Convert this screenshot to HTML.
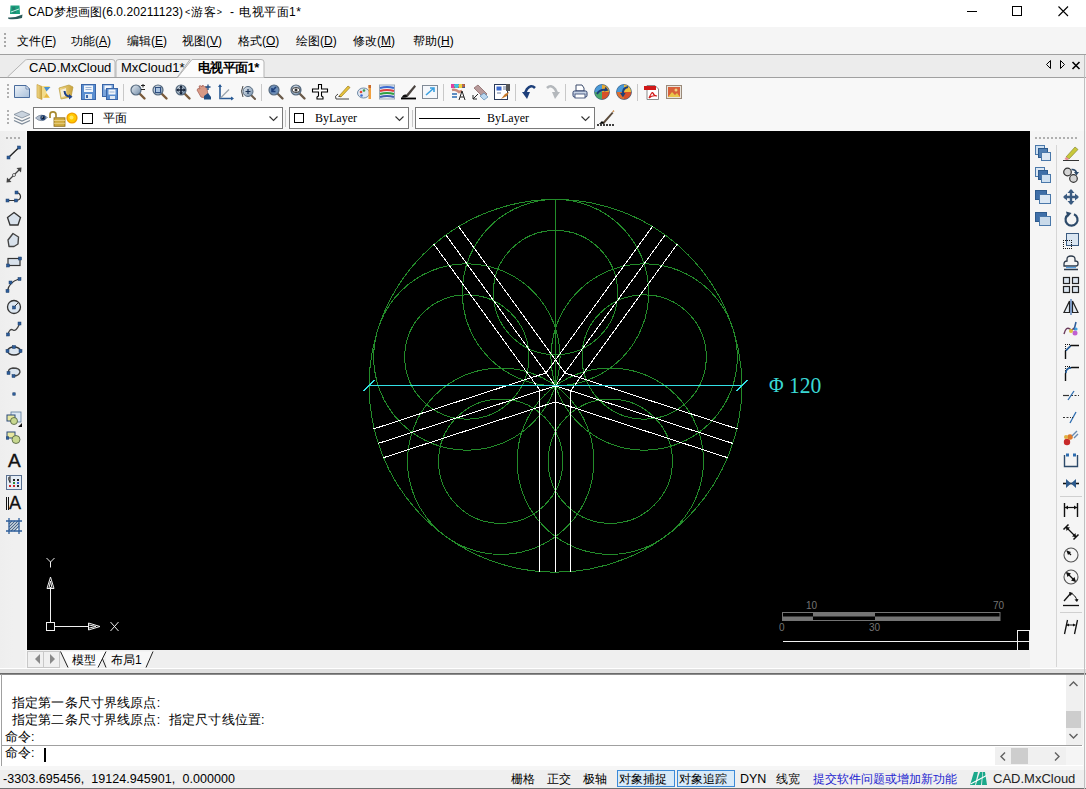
<!DOCTYPE html>
<html><head><meta charset="utf-8">
<style>
*{box-sizing:border-box}
html,body{margin:0;padding:0;width:1086px;height:789px;overflow:hidden;background:#f0f0f0;font-family:"Liberation Sans",sans-serif;color:#000}
.a{position:absolute}
.t{position:absolute;white-space:nowrap;font-size:12px;line-height:14px}
svg{position:absolute;overflow:visible}
</style></head><body>
<!-- title bar -->
<div class="a" style="left:0;top:0;width:1086px;height:27px;background:#fff"></div>
<svg style="left:7px;top:4px" width="17" height="16" viewBox="0 0 17 16">
<path d="M3.5 1.5 H12.5 L13 10 H3 Z" fill="#1aa07e"/>
<path d="M5 3 L8 2.5 L9 9 L6 9.5 Z" fill="#2a6a66" opacity=".6"/>
<path d="M4 8 L12 5" stroke="#bff0e0" stroke-width="1"/>
<path d="M1 13.5 Q8 14 15.5 10.5 L15 14 Q8 16 1.5 15 Z" fill="#2a5a5a"/>
</svg>
<div class="t" style="left:28px;top:5px;font-size:12px;color:#000;letter-spacing:.1px">CAD梦想画图(6.0.20211123)<span style="font-size:9px;margin:0 1px 0 2px;position:relative;top:-1px">&lt;</span>游客<span style="font-size:9px;margin:0 0 0 1px;position:relative;top:-1px">&gt;</span><span style="margin-left:8px">-</span><span style="margin-left:5px;letter-spacing:.5px">电视平面1*</span></div>
<svg style="left:966px;top:5px" width="14" height="14"><line x1="1" y1="6.5" x2="11" y2="6.5" stroke="#000" stroke-width="1"/></svg>
<svg style="left:1011px;top:5px" width="14" height="14"><rect x="1.5" y="1.5" width="9" height="9" fill="none" stroke="#000" stroke-width="1"/></svg>
<svg style="left:1057px;top:5px" width="14" height="14"><path d="M1.5 1.5 L11 11 M11 1.5 L1.5 11" stroke="#000" stroke-width="1.1"/></svg>

<!-- menu bar -->
<div class="a" style="left:0;top:27px;width:1086px;height:27px;background:#f5f5f5"></div>
<div class="a" style="left:0;top:54px;width:1086px;height:1px;background:#a0a0a0"></div>
<div class="a" style="left:4px;top:33px;width:2px;height:14px;background:repeating-linear-gradient(#a8a8a8 0 2px,transparent 2px 4px)"></div>
<div class="t" style="left:17px;top:34px">文件(<u>F</u>)</div>
<div class="t" style="left:71px;top:34px">功能(<u>A</u>)</div>
<div class="t" style="left:127px;top:34px">编辑(<u>E</u>)</div>
<div class="t" style="left:182px;top:34px">视图(<u>V</u>)</div>
<div class="t" style="left:238px;top:34px">格式(<u>O</u>)</div>
<div class="t" style="left:296px;top:34px">绘图(<u>D</u>)</div>
<div class="t" style="left:353px;top:34px">修改(<u>M</u>)</div>
<div class="t" style="left:413px;top:34px">帮助(<u>H</u>)</div>

<!-- tab bar -->
<div class="a" style="left:0;top:55px;width:1086px;height:22px;background:#ececec"></div>
<div class="a" style="left:0;top:77px;width:1086px;height:1px;background:#a0a0a0"></div>
<svg style="left:0;top:55px" width="280" height="23">
<path d="M7.5 22 L25.5 5 Q26.5 4.5 28 4.5 L112 4.5 Q115 4.5 115 7 L115 22" fill="#f3f3f3" stroke="#b4b4b4"/>
<path d="M116 22 L116 7 Q116 4.5 119 4.5 L190 4.5 L177.5 22" fill="#f3f3f3" stroke="#b4b4b4"/>
<path d="M177.5 22.5 L192 4.5 L261 4.5 Q264 4.5 264 7 L264 22.5" fill="#fcfcfc" stroke="#b4b4b4"/>
</svg>
<div class="t" style="left:29px;top:60px;font-size:13px;line-height:15px">CAD.MxCloud</div>
<div class="t" style="left:121px;top:60px;font-size:13px;line-height:15px">MxCloud1*</div>
<div class="t" style="left:198px;top:60px;font-size:13px;line-height:15px;font-weight:bold;letter-spacing:-0.6px">电视平面1*</div>
<svg style="left:1044px;top:59px" width="40" height="12">
<path d="M6.5 1.5 L2.5 5.5 L6.5 9.5 Z" fill="none" stroke="#000"/>
<path d="M16.5 1.5 L20.5 5.5 L16.5 9.5 Z" fill="none" stroke="#000"/>
<path d="M28.5 3 L35.5 10 M35.5 3 L28.5 10" stroke="#000" stroke-width="1.6"/>
</svg>


<!-- toolbars -->
<div class="a" style="left:0;top:78px;width:1086px;height:53px;background:#f8f8f8"></div>
<svg width="0" height="0" style="left:0;top:0"><defs>
<linearGradient id="gBlueL" x1="0" y1="0" x2="1" y2="1"><stop offset="0" stop-color="#eef3f9"/><stop offset="1" stop-color="#a9c0da"/></linearGradient>
<linearGradient id="gMag" x1="0" y1="0" x2="1" y2="1"><stop offset="0" stop-color="#e8eef4"/><stop offset="1" stop-color="#6f8aa6"/></linearGradient>
<linearGradient id="gFold" x1="0" y1="0" x2="1" y2="0"><stop offset="0" stop-color="#f4dc8c"/><stop offset="1" stop-color="#c9a23c"/></linearGradient>
<radialGradient id="gGlobe" cx=".4" cy=".4" r=".7"><stop offset="0" stop-color="#f6d36a"/><stop offset=".45" stop-color="#3f9bd4"/><stop offset=".8" stop-color="#d35a2a"/><stop offset="1" stop-color="#2f5f9a"/></radialGradient>
<radialGradient id="gSun" cx=".5" cy=".5" r=".5"><stop offset="0" stop-color="#ffe070"/><stop offset="1" stop-color="#e8a800"/></radialGradient>
</defs></svg>
<div class="a" style="left:7px;top:84px;width:2px;height:16px;background:repeating-linear-gradient(#b0b0b0 0 2px,transparent 2px 4px)"></div>
<svg style="left:14px;top:84px" width="16" height="16" viewBox="0 0 16 16"><path d="M0.5 1.5 H12 L15.5 5 V13.5 H0.5 Z" fill="url(#gBlueL)" stroke="#4a6c9c"/><path d="M12 1.5 L12 5 L15.5 5 Z" fill="#f4f7fb" stroke="#4a6c9c" stroke-width=".7"/></svg>
<svg style="left:36px;top:84px" width="16" height="16" viewBox="0 0 16 16"><path d="M1 0.5 L6 2.5 V15.5 L1 13.5 Z" fill="url(#gFold)" stroke="#c8a040" stroke-width=".7"/><path d="M6 2 H14 L10 8 L14 14 H6 Z" fill="#f3dc8a"/><path d="M8 3 H14.5 L10.5 7.5 Z" fill="#4a90d0"/><path d="M8 13.5 H13.5 L10.5 9.5 Z" fill="#e8b840"/></svg>
<svg style="left:58px;top:84px" width="16" height="16" viewBox="0 0 16 16"><path d="M1 4 L11 1 L15 3 L13 13 L3 15 Z" fill="url(#gFold)" stroke="#b89a3a" stroke-width=".7"/><path d="M2.5 6 L8 4 L8.5 12 L3.5 13 Z" fill="#f6f2e6" opacity=".9"/><path d="M6.5 7 Q7 12.5 12 12.5" stroke="#1d3f86" stroke-width="2" fill="none"/><path d="M11 10 L14.5 12.7 L11 15.5 Z" fill="#1d3f86"/></svg>
<svg style="left:81px;top:84px" width="16" height="16" viewBox="0 0 16 16"><rect x="0.5" y="0.5" width="14" height="15" fill="#5a8ed0" stroke="#3a66a8"/><rect x="3" y="1.5" width="9" height="6.5" fill="#f2f6fb"/><line x1="4.5" y1="3.5" x2="10.5" y2="3.5" stroke="#9ab3d4"/><line x1="4.5" y1="5.5" x2="10.5" y2="5.5" stroke="#9ab3d4"/><rect x="4" y="10" width="7" height="5" fill="#dfe8f3"/><rect x="5" y="11" width="2" height="3" fill="#3a66a8"/></svg>
<svg style="left:102px;top:84px" width="16" height="16" viewBox="0 0 16 16"><rect x="0.5" y="0.5" width="11" height="12" fill="#7aa4da" stroke="#3a66a8"/><rect x="2.5" y="1.5" width="7" height="4" fill="#f2f6fb"/><rect x="4.5" y="4.5" width="11" height="11" fill="#5a8ed0" stroke="#3a66a8"/><rect x="6.5" y="5.5" width="7" height="5" fill="#f2f6fb"/><line x1="7.5" y1="8" x2="12.5" y2="8" stroke="#9ab3d4"/><rect x="8" y="12" width="5" height="3" fill="#dfe8f3"/></svg>
<div class="a" style="left:123px;top:84px;width:1px;height:17px;background:#c8c8c8"></div>
<svg style="left:130px;top:84px" width="16" height="16" viewBox="0 0 16 16"><line x1="9" y1="9" x2="14.5" y2="14.5" stroke="#7a5a3a" stroke-width="2.4" stroke-linecap="round"/><circle cx="6" cy="6" r="5" fill="url(#gMag)" stroke="#55697e" stroke-width="1.2"/><path d="M11 1.5 H15 M13 0 V3.5 M11 5.5 H15" stroke="#222" stroke-width="1"/></svg>
<svg style="left:152px;top:84px" width="16" height="16" viewBox="0 0 16 16"><line x1="9" y1="9" x2="14.5" y2="14.5" stroke="#7a5a3a" stroke-width="2.4" stroke-linecap="round"/><circle cx="6" cy="6" r="5" fill="url(#gMag)" stroke="#55697e" stroke-width="1.2"/><rect x="3.5" y="3.5" width="5" height="5" fill="#a9c3e0" stroke="#2e4f82"/></svg>
<svg style="left:175px;top:84px" width="16" height="16" viewBox="0 0 16 16"><line x1="9" y1="9" x2="14.5" y2="14.5" stroke="#7a5a3a" stroke-width="2.4" stroke-linecap="round"/><circle cx="6" cy="6" r="5" fill="url(#gMag)" stroke="#55697e" stroke-width="1.2"/><path d="M6 2 V10 M2 6 H10" stroke="#17243a" stroke-width="1.6"/><path d="M6 1 L4 3.5 H8 Z M6 11 L4 8.5 H8 Z M1 6 L3.5 4 V8 Z M11 6 L8.5 4 V8 Z" fill="#17243a"/></svg>
<svg style="left:196px;top:84px" width="16" height="16" viewBox="0 0 16 16"><path d="M1 6 Q2 3 4 5 L3 2 Q5 1 6 3 L6 1.5 Q8 1 8.5 3 L9 2.5 Q11 2.5 11 5 L12 11 L9 14 L5 13 Z" fill="#d89a86" stroke="#a9665a" stroke-width=".8"/><path d="M8 12 L12 9 L15 13 V15.5 H8 Z" fill="#1f4c80"/><path d="M12 0.5 V6 M9.5 3 H14.5" stroke="#1f4c80" stroke-width="1.3"/></svg>
<svg style="left:218px;top:84px" width="16" height="16" viewBox="0 0 16 16"><path d="M2 1 V14.5 H15" stroke="#2a5b95" stroke-width="1.6" fill="none"/><path d="M2 0 L0 3 H4 Z M16 14.5 L13 12.5 V16.5 Z" fill="#2a5b95"/><line x1="2.5" y1="14" x2="11" y2="5.5" stroke="#9aa4ae" stroke-width="1.3"/></svg>
<svg style="left:240px;top:84px" width="16" height="16" viewBox="0 0 16 16"><line x1="10" y1="10" x2="15" y2="15" stroke="#6a5a4a" stroke-width="2" stroke-linecap="round"/><circle cx="8" cy="7.5" r="5" fill="url(#gMag)" stroke="#55697e"/><path d="M8 5 V10 M5.5 7.5 H10.5" stroke="#1d3558" stroke-width="1.2"/><path d="M3 2 Q0 7 3 13" stroke="#444" fill="none"/></svg>
<div class="a" style="left:261px;top:84px;width:1px;height:17px;background:#c8c8c8"></div>
<svg style="left:268px;top:84px" width="16" height="16" viewBox="0 0 16 16"><line x1="9" y1="9" x2="14.5" y2="14.5" stroke="#6a5a4a" stroke-width="2.4" stroke-linecap="round"/><circle cx="6" cy="6" r="5" fill="#6e8fb8" stroke="#55697e" stroke-width="1.2"/><path d="M8 3 L4 7 M4 4 V7.5 H7.5" stroke="#1d3f7a" stroke-width="1.6" fill="none"/></svg>
<svg style="left:290px;top:84px" width="16" height="16" viewBox="0 0 16 16"><line x1="9" y1="9" x2="14.5" y2="14.5" stroke="#6a5a4a" stroke-width="2.4" stroke-linecap="round"/><circle cx="6" cy="6" r="5" fill="url(#gMag)" stroke="#55697e" stroke-width="1.2"/><ellipse cx="6" cy="6" rx="4" ry="2.4" fill="#fff" stroke="#333"/><circle cx="6" cy="6" r="1.5" fill="#333"/></svg>
<svg style="left:312px;top:84px" width="16" height="16" viewBox="0 0 16 16"><path d="M6.5 0.5 H9.5 V5 H15.5 V8 H9.5 V12 L11 13 V15 H5 V13 L6.5 12 V8 H0.5 V5 H6.5 Z" fill="#fff" stroke="#000" stroke-width="1.1"/></svg>
<svg style="left:334px;top:84px" width="16" height="16" viewBox="0 0 16 16"><path d="M5 12 L14 2 L16 3.5 L7 13 Z" fill="#e8c43c" stroke="#9a7a1a" stroke-width=".7"/><path d="M4 13 L5 12 L7 13 Z" fill="#333"/><path d="M4 10 Q0 12 2 15 H15" stroke="#444" fill="none"/></svg>
<svg style="left:357px;top:84px" width="16" height="16" viewBox="0 0 16 16"><ellipse cx="6.5" cy="9" rx="6" ry="5" fill="#dfe8f2" stroke="#6f8aa6"/><circle cx="4" cy="8" r="1.3" fill="#e34a3a"/><circle cx="7" cy="6.5" r="1.3" fill="#3a9a4a"/><circle cx="4.5" cy="11.5" r="1.3" fill="#3a6ad0"/><rect x="11.5" y="1" width="2.5" height="14" fill="#f0a040"/><rect x="11.5" y="1" width="2.5" height="3" fill="#c86a2a"/></svg>
<svg style="left:379px;top:84px" width="16" height="16" viewBox="0 0 16 16"><rect x="0.5" y="1" width="15" height="14" fill="#e9eef4" stroke="#9aaabb"/><path d="M1 4 Q8 2 15 4" stroke="#3a6ad0" stroke-width="2" fill="none"/><path d="M1 7 Q8 5 15 7" stroke="#e04040" stroke-width="2" fill="none"/><path d="M1 10 Q8 8 15 10" stroke="#30a040" stroke-width="2" fill="none"/><path d="M1 13 Q8 11 15 13" stroke="#4060b0" stroke-width="2" fill="none"/></svg>
<svg style="left:400px;top:84px" width="16" height="16" viewBox="0 0 16 16"><line x1="1" y1="14.5" x2="16" y2="14.5" stroke="#000" stroke-width="1.8"/><path d="M6 11 L14.5 1 L16 2.5 L8 12.5 Z" fill="#4a4440"/><path d="M1.5 13.8 Q3 10 6 10.5 L8 12.5 Q6 14 1.5 13.8 Z" fill="#111"/></svg>
<svg style="left:422px;top:84px" width="16" height="16" viewBox="0 0 16 16"><rect x="0.5" y="1.5" width="15" height="13" fill="#f4f7fb" stroke="#808a96"/><path d="M4 11 L12 4 M8 4 H12 V8" stroke="#3aa0e0" stroke-width="1.6" fill="none"/></svg>
<div class="a" style="left:443px;top:84px;width:1px;height:17px;background:#c8c8c8"></div>
<svg style="left:450px;top:84px" width="16" height="16" viewBox="0 0 16 16"><rect x="1" y="0" width="14" height="4" fill="url(#gGlobe)"/><path d="M1 0 H4 V4 H1Z" fill="#e040a0"/><path d="M5 0 H8 V4 H5Z" fill="#40c0e0"/><path d="M9 0 H12 V4 H9Z" fill="#f0d040"/><path d="M2 6 Q6 5 9 8 L12 7" stroke="#c98a7a" stroke-width="2.5" fill="none"/><path d="M2 10 H7 M2 13 H7" stroke="#2a6ab0" stroke-width="1.5"/><path d="M9 16 L12 7 L15 16 M10 13 H14" stroke="#222" fill="none"/></svg>
<svg style="left:472px;top:84px" width="16" height="16" viewBox="0 0 16 16"><path d="M2 4 L6 1 L15 10 L11 13 Z" fill="#b89a9a" stroke="#8a6a6a" stroke-width=".8"/><path d="M1 15 L6 10 M1 15 V11 M1 15 H5" stroke="#222" fill="none"/><path d="M8 12 L12 16 L16 13 L12 9 Z" fill="#bcd8f0" stroke="#5a8ab0" stroke-width=".7"/></svg>
<svg style="left:494px;top:84px" width="16" height="16" viewBox="0 0 16 16"><rect x="0.5" y="0.5" width="13" height="15" fill="#fff" stroke="#2a3a5a"/><rect x="2.5" y="2.5" width="5" height="4" fill="#3a6ad0"/><path d="M9 3 H12 M9 5 H12 M3 9 H7" stroke="#6a7a9a"/><path d="M7 15 L11 10 L15 8 L13 12 Z" fill="#c87a2a"/><rect x="12" y="0" width="4" height="7" fill="#555"/></svg>
<div class="a" style="left:515px;top:84px;width:1px;height:17px;background:#c8c8c8"></div>
<svg style="left:522px;top:84px" width="16" height="16" viewBox="0 0 16 16"><path d="M13 4 Q9 0 5 5 L3 9" stroke="#1d3f7a" stroke-width="2.6" fill="none"/><path d="M0 8 L5 15 L8 8 Z" fill="#1d3f7a"/></svg>
<svg style="left:544px;top:84px" width="16" height="16" viewBox="0 0 16 16"><path d="M3 4 Q7 0 11 5 L13 9" stroke="#b4b8bc" stroke-width="2.6" fill="none"/><path d="M16 8 L11 15 L8 8 Z" fill="#b4b8bc"/></svg>
<div class="a" style="left:565px;top:84px;width:1px;height:17px;background:#c8c8c8"></div>
<svg style="left:572px;top:84px" width="16" height="16" viewBox="0 0 16 16"><path d="M4 1 H10 L12 4 V7 H4 Z" fill="#fff" stroke="#3a4a6a"/><rect x="1" y="7" width="14" height="6" rx="1.5" fill="#c8d4e6" stroke="#2e3f6a"/><rect x="3" y="10" width="10" height="4" fill="#fff" stroke="#2e3f6a" stroke-width=".8"/></svg>
<svg style="left:594px;top:84px" width="16" height="16" viewBox="0 0 16 16"><circle cx="8" cy="8" r="7.5" fill="#3a8ad0"/><path d="M8 8 L8 0.5 A7.5 7.5 0 0 1 15.5 8 Z" fill="#e8a830"/><path d="M8 8 L15.5 8 A7.5 7.5 0 0 1 8 15.5 Z" fill="#d8502a"/><path d="M8 8 L8 15.5 A7.5 7.5 0 0 1 0.5 8 Z" fill="#4aa86a"/><path d="M8 8 L0.5 8 A7.5 7.5 0 0 1 8 0.5 Z" fill="#4a9ad8"/><circle cx="8" cy="8" r="7.5" fill="none" stroke="#3a5a7a" stroke-width=".6"/><path d="M3 10 Q6 5 12 6" stroke="#1d3f7a" stroke-width="2" fill="none"/><path d="M11.5 2.5 L14.5 6.5 L10 7.5 Z" fill="#1d3f7a"/></svg>
<svg style="left:616px;top:84px" width="16" height="16" viewBox="0 0 16 16"><circle cx="8" cy="8" r="7.5" fill="#3a8ad0"/><path d="M8 8 L8 0.5 A7.5 7.5 0 0 1 15.5 8 Z" fill="#f0c040"/><path d="M8 8 L15.5 8 A7.5 7.5 0 0 1 8 15.5 Z" fill="#d8502a"/><path d="M8 8 L8 15.5 A7.5 7.5 0 0 1 0.5 8 Z" fill="#e07030"/><path d="M8 8 L0.5 8 A7.5 7.5 0 0 1 8 0.5 Z" fill="#4a9ad8"/><circle cx="8" cy="8" r="7.5" fill="none" stroke="#3a5a7a" stroke-width=".6"/><path d="M12 3 Q6 4 7 11" stroke="#1d3f7a" stroke-width="2" fill="none"/><path d="M4 9 L7 13.5 L9.5 9 Z" fill="#1d3f7a"/></svg>
<div class="a" style="left:637px;top:84px;width:1px;height:17px;background:#c8c8c8"></div>
<svg style="left:644px;top:84px" width="16" height="16" viewBox="0 0 16 16"><path d="M3 1.5 H11 L14.5 5 V15.5 H3 Z" fill="#fff" stroke="#8a8a8a"/><rect x="0" y="2" width="12" height="4" fill="#d01818"/><path d="M5 14 Q8 7 9 9 Q10 12 13 12 Q8 11 5 14" stroke="#d01818" fill="none" stroke-width="1.2"/></svg>
<svg style="left:666px;top:84px" width="16" height="16" viewBox="0 0 16 16"><rect x="0.5" y="1.5" width="15" height="13" fill="#e9e4dc" stroke="#9a8a7a"/><rect x="2" y="3" width="12" height="10" fill="#d8603a"/><path d="M2 13 L6 8 L9 11 L11 9 L14 13 Z" fill="#e9c44a"/><circle cx="10" cy="6" r="1.5" fill="#f0d080"/></svg>


<!-- row2 -->
<div class="a" style="left:7px;top:110px;width:2px;height:15px;background:repeating-linear-gradient(#b0b0b0 0 2px,transparent 2px 4px)"></div>
<svg style="left:14px;top:110px" width="16" height="16" viewBox="0 0 16 16"><path d="M8 1 L16 4.5 L8 8 L0 4.5 Z" fill="#c9d3de" stroke="#7d8a98" stroke-width=".8"/><path d="M0 7.5 L8 11 L16 7.5" fill="none" stroke="#7d8a98" stroke-width="1.2"/><path d="M0 10.5 L8 14 L16 10.5" fill="none" stroke="#7d8a98" stroke-width="1.2"/></svg>
<div class="a" style="left:33px;top:107px;width:250px;height:22px;background:#fff;border:1px solid #7a7a7a"></div>
<svg style="left:35px;top:113px" width="13" height="10" viewBox="0 0 13 10"><path d="M0.5 5 Q6 -0.5 12.5 4.5 Q6 10.5 0.5 5 Z" fill="#b4c0d0" stroke="#5a6a80" stroke-width=".6"/><circle cx="8" cy="4.8" r="2.7" fill="#2a4a78"/><circle cx="8" cy="4.8" r="1.2" fill="#0d1a30"/><circle cx="7.3" cy="4" r=".6" fill="#fff"/></svg>
<svg style="left:48px;top:110px" width="18" height="18" viewBox="0 0 18 18"><path d="M2 8 V4.5 Q2 1.8 5 1.8 Q8 1.8 8 4.5 V7.5" stroke="#a88a30" stroke-width="1.7" fill="none"/><rect x="6" y="7.8" width="11" height="8.5" fill="#d0ac40" stroke="#8a6a1a" stroke-width=".8"/><path d="M6 10.5 H17 M6 13.3 H17" stroke="#f0d890" stroke-width=".8"/></svg>
<svg style="left:66px;top:112px" width="12" height="12" viewBox="0 0 12 12"><circle cx="6" cy="6" r="5.6" fill="#f0a000"/><circle cx="6" cy="6" r="4.2" fill="#ffc800"/><circle cx="5.5" cy="5.5" r="2" fill="#ffe860"/></svg>
<div class="a" style="left:82px;top:113px;width:11px;height:11px;border:1px solid #000;background:#fff"></div>
<div class="t" style="left:103px;top:111px;font-size:12px">平面</div>
<svg style="left:269px;top:116px" width="9" height="6" viewBox="0 0 9 6"><path d="M0.5 0.5 L4.5 4.5 L8.5 0.5" stroke="#333" fill="none" stroke-width="1.1"/></svg>
<div class="a" style="left:285px;top:110px;width:1px;height:17px;background:#c8c8c8"></div>
<div class="a" style="left:289px;top:107px;width:120px;height:22px;background:#fff;border:1px solid #7a7a7a"></div>
<div class="a" style="left:294px;top:113px;width:10px;height:10px;border:1px solid #000;background:#fff"></div>
<div class="t" style="left:315px;top:111px;font-family:'Liberation Serif',serif;font-size:12px">ByLayer</div>
<svg style="left:395px;top:116px" width="9" height="6" viewBox="0 0 9 6"><path d="M0.5 0.5 L4.5 4.5 L8.5 0.5" stroke="#333" fill="none" stroke-width="1.1"/></svg>
<div class="a" style="left:412px;top:110px;width:1px;height:17px;background:#c8c8c8"></div>
<div class="a" style="left:415px;top:107px;width:180px;height:22px;background:#fff;border:1px solid #7a7a7a"></div>
<div class="a" style="left:419px;top:118px;width:61px;height:1px;background:#000"></div>
<div class="t" style="left:487px;top:111px;font-family:'Liberation Serif',serif;font-size:12px">ByLayer</div>
<svg style="left:581px;top:116px" width="9" height="6" viewBox="0 0 9 6"><path d="M0.5 0.5 L4.5 4.5 L8.5 0.5" stroke="#333" fill="none" stroke-width="1.1"/></svg>
<svg style="left:597px;top:110px" width="18" height="17" viewBox="0 0 18 17"><path d="M0 15 H17" stroke="#000" stroke-width="1.3" stroke-dasharray="2 1"/><path d="M5 13 L15 2 L16.5 3 L7 14 Z" fill="#5a4a3a"/><path d="M15 2 L16.5 0 L17.5 1.5 Z" fill="#c87a2a"/><path d="M2 14 L5 11 L7.5 13.5 Z" fill="#000"/></svg>


<!-- left toolbar -->
<div class="a" style="left:0;top:131px;width:27px;height:540px;background:linear-gradient(90deg,#eeeeee,#f0f0f0 50%,#f0f0f0 92%,#f9f9f9)"></div>
<div class="a" style="left:6px;top:137px;width:14px;height:2px;background:repeating-linear-gradient(90deg,#b0b0b0 0 2px,transparent 2px 4px)"></div>
<svg style="left:6px;top:145px" width="16" height="16" viewBox="0 0 16 16"><line x1="2" y1="13" x2="13.5" y2="2" stroke="#222" stroke-width="1.4"/><rect x="1.0" y="11.0" width="3" height="3" fill="#2d5d9a" stroke="#1d3f6a" stroke-width=".5"/><rect x="11.5" y="1.0" width="3" height="3" fill="#2d5d9a" stroke="#1d3f6a" stroke-width=".5"/></svg>
<svg style="left:6px;top:167px" width="16" height="16" viewBox="0 0 16 16"><line x1="1.5" y1="14.5" x2="14.5" y2="1.5" stroke="#444" stroke-width="1.2"/><path d="M0.5 15.5 L1 10.5 L5.5 15 Z M15.5 0.5 L15 5.5 L10.5 1 Z" fill="#444"/><circle cx="8" cy="8" r="1.5" fill="#fff" stroke="#444" stroke-width=".8"/></svg>
<svg style="left:6px;top:189px" width="16" height="16" viewBox="0 0 16 16"><path d="M1.5 11.5 H10 Q15 11 14.5 7 Q14 4 10.5 3.5" stroke="#333" stroke-width="1.2" fill="none"/><rect x="0.0" y="10.0" width="3" height="3" fill="#2d5d9a" stroke="#1d3f6a" stroke-width=".5"/><rect x="8.5" y="10.0" width="3" height="3" fill="#2d5d9a" stroke="#1d3f6a" stroke-width=".5"/><rect x="9.0" y="2.0" width="3" height="3" fill="#2d5d9a" stroke="#1d3f6a" stroke-width=".5"/></svg>
<svg style="left:6px;top:211px" width="16" height="16" viewBox="0 0 16 16"><path d="M8 1.5 L14.5 6.5 L12 14 H4 L1.5 6.5 Z" fill="#d9e2ec" stroke="#333" stroke-width="1.3"/></svg>
<svg style="left:6px;top:232px" width="16" height="16" viewBox="0 0 16 16"><path d="M7 1.5 L12.5 5 L12 12 L8 14.5 H3 L2 8 Z" fill="#d9e2ec" stroke="#444" stroke-width="1.4" stroke-linejoin="round"/></svg>
<svg style="left:6px;top:254px" width="16" height="16" viewBox="0 0 16 16"><rect x="2" y="4.5" width="12" height="7" fill="#d9e2ec" stroke="#333" stroke-width="1.2"/><rect x="0.5" y="10.0" width="3" height="3" fill="#2d5d9a" stroke="#1d3f6a" stroke-width=".5"/><rect x="12.5" y="3.0" width="3" height="3" fill="#2d5d9a" stroke="#1d3f6a" stroke-width=".5"/></svg>
<svg style="left:6px;top:277px" width="16" height="16" viewBox="0 0 16 16"><path d="M1.5 14 Q3 5 13 2" stroke="#333" stroke-width="1.3" fill="none"/><rect x="0.0" y="12.5" width="3" height="3" fill="#2d5d9a" stroke="#1d3f6a" stroke-width=".5"/><rect x="3.0" y="4.0" width="3" height="3" fill="#2d5d9a" stroke="#1d3f6a" stroke-width=".5"/><rect x="12.0" y="0.5" width="3" height="3" fill="#2d5d9a" stroke="#1d3f6a" stroke-width=".5"/></svg>
<svg style="left:6px;top:299px" width="16" height="16" viewBox="0 0 16 16"><circle cx="8" cy="8" r="6.5" fill="#dce6f0" stroke="#333" stroke-width="1.3"/><line x1="8" y1="8" x2="12" y2="4" stroke="#333"/><rect x="6.5" y="7.0" width="3" height="3" fill="#2d5d9a" stroke="#1d3f6a" stroke-width=".5"/></svg>
<svg style="left:6px;top:321px" width="16" height="16" viewBox="0 0 16 16"><path d="M2 13 Q4 7 7 9 Q10 11 13.5 3" stroke="#444" stroke-width="1.3" fill="none"/><rect x="0.5" y="12.0" width="3" height="3" fill="#2d5d9a" stroke="#1d3f6a" stroke-width=".5"/><rect x="12.0" y="1.0" width="3" height="3" fill="#2d5d9a" stroke="#1d3f6a" stroke-width=".5"/></svg>
<svg style="left:6px;top:343px" width="16" height="16" viewBox="0 0 16 16"><ellipse cx="8" cy="8" rx="6.5" ry="4" fill="#dce6f0" stroke="#333" stroke-width="1.3"/><rect x="6.5" y="2.5" width="3" height="3" fill="#2d5d9a" stroke="#1d3f6a" stroke-width=".5"/><rect x="0.0" y="6.5" width="3" height="3" fill="#2d5d9a" stroke="#1d3f6a" stroke-width=".5"/><rect x="13.0" y="6.5" width="3" height="3" fill="#2d5d9a" stroke="#1d3f6a" stroke-width=".5"/></svg>
<svg style="left:6px;top:364px" width="16" height="16" viewBox="0 0 16 16"><path d="M3 9 Q1 5 7 4 Q14 4 14 8 Q13 12 7.5 12" stroke="#444" stroke-width="1.3" fill="#dce6f0"/><rect x="1.0" y="7.5" width="3" height="3" fill="#2d5d9a" stroke="#1d3f6a" stroke-width=".5"/><rect x="6.0" y="10.5" width="3" height="3" fill="#2d5d9a" stroke="#1d3f6a" stroke-width=".5"/></svg>
<svg style="left:6px;top:386px" width="16" height="16" viewBox="0 0 16 16"><rect x="6.75" y="6.75" width="2.5" height="2.5" fill="#2d5d9a" stroke="#1d3f6a" stroke-width=".5"/></svg>
<svg style="left:6px;top:411px" width="16" height="16" viewBox="0 0 16 16"><rect x="5" y="1" width="10" height="10" fill="#dde8f4" stroke="#5a7a9a" stroke-width=".8"/><rect x="1" y="4" width="8" height="6" fill="#e8e8a0" stroke="#2a4a7a"/><circle cx="8" cy="10" r="3.5" fill="#c8d890" stroke="#4a5a3a" stroke-width=".8"/><path d="M16 12 V16 H12 Z" fill="#111"/></svg>
<svg style="left:6px;top:430px" width="16" height="16" viewBox="0 0 16 16"><rect x="1" y="2" width="8" height="6" fill="#e8e8a0" stroke="#2a4a7a"/><circle cx="10" cy="9.5" r="4" fill="#c8d890" stroke="#4a5a3a" stroke-width=".8"/><rect x="0.25" y="6.75" width="2.5" height="2.5" fill="#2d5d9a" stroke="#1d3f6a" stroke-width=".5"/></svg>
<div class="t" style="left:8px;top:451px;font-size:19px;line-height:19px;color:#111;-webkit-text-stroke:.4px #111">A</div>
<svg style="left:6px;top:475px" width="16" height="16" viewBox="0 0 16 16"><rect x="0.5" y="0.5" width="15" height="14" fill="#e4ecf4" stroke="#5a7090"/><path d="M4 1 V8 M3 2 Q2 5 4 7" stroke="#222" fill="none"/><rect x="7" y="4" width="2" height="2" fill="#222"/><rect x="11" y="4" width="2" height="2" fill="#222"/><rect x="7" y="7" width="2" height="2" fill="#2a8a3a"/><rect x="11" y="7" width="2" height="2" fill="#3a5ad0"/><rect x="3" y="10" width="2" height="2" fill="#d02a2a"/><rect x="7" y="10" width="2" height="2" fill="#d02a2a"/><rect x="11" y="10" width="2" height="2" fill="#2a2a2a"/></svg>
<div class="a" style="left:6px;top:497px;width:1px;height:13px;background:#111"></div><div class="a" style="left:8px;top:497px;width:1px;height:13px;background:#111"></div>
<div class="t" style="left:9px;top:494px;font-size:18px;line-height:18px;color:#111;-webkit-text-stroke:.3px #111">A</div>
<svg style="left:6px;top:518px" width="16" height="16" viewBox="0 0 16 16"><rect x="3" y="3" width="10" height="10" fill="#fff"/><path d="M3 6 L6 3 M3 9 L9 3 M3 12 L12 3 M5 13 L13 5 M8 13 L13 8" stroke="#4a6a8a" stroke-width="1.1"/><path d="M0 3 H16 M0 13 H16 M3 0 V16 M13 0 V16" stroke="#2d5d9a" stroke-width="1.3"/></svg>


<!-- canvas -->
<div class="a" style="left:27px;top:131px;width:1003px;height:519px;background:#000;overflow:hidden"></div>
<svg style="left:0;top:0" width="1086" height="789" shape-rendering="crispEdges">
<circle cx="555.5" cy="385.8" r="186.4" stroke="#238c2a" fill="none"/>
<circle cx="555.50" cy="292.60" r="93.20" stroke="#238c2a" fill="none"/>
<circle cx="555.50" cy="292.60" r="62.13" stroke="#238c2a" fill="none"/>
<circle cx="466.86" cy="357.00" r="93.20" stroke="#238c2a" fill="none"/>
<circle cx="466.86" cy="357.00" r="62.13" stroke="#238c2a" fill="none"/>
<circle cx="500.72" cy="461.20" r="93.20" stroke="#238c2a" fill="none"/>
<circle cx="500.72" cy="461.20" r="62.13" stroke="#238c2a" fill="none"/>
<circle cx="610.28" cy="461.20" r="93.20" stroke="#238c2a" fill="none"/>
<circle cx="610.28" cy="461.20" r="62.13" stroke="#238c2a" fill="none"/>
<circle cx="644.14" cy="357.00" r="93.20" stroke="#238c2a" fill="none"/>
<circle cx="644.14" cy="357.00" r="62.13" stroke="#238c2a" fill="none"/>
<line x1="555.5" y1="199.4" x2="555.5" y2="572.2" stroke="#238c2a"/>
<line x1="555.50" y1="385.80" x2="555.50" y2="572.20" stroke="#ffffff"/>
<line x1="570.70" y1="390.74" x2="570.70" y2="572.20" stroke="#ffffff"/>
<line x1="539.30" y1="390.74" x2="539.30" y2="572.20" stroke="#ffffff"/>
<line x1="555.50" y1="385.80" x2="732.78" y2="443.40" stroke="#ffffff"/>
<line x1="564.89" y1="372.87" x2="737.47" y2="428.94" stroke="#ffffff"/>
<line x1="555.50" y1="401.78" x2="728.08" y2="457.86" stroke="#ffffff"/>
<line x1="555.50" y1="385.80" x2="665.06" y2="235.00" stroke="#ffffff"/>
<line x1="546.11" y1="372.87" x2="652.77" y2="226.06" stroke="#ffffff"/>
<line x1="570.70" y1="390.74" x2="677.36" y2="243.93" stroke="#ffffff"/>
<line x1="555.50" y1="385.80" x2="445.94" y2="235.00" stroke="#ffffff"/>
<line x1="540.30" y1="390.74" x2="433.64" y2="243.93" stroke="#ffffff"/>
<line x1="564.89" y1="372.87" x2="458.23" y2="226.06" stroke="#ffffff"/>
<line x1="555.50" y1="385.80" x2="378.22" y2="443.40" stroke="#ffffff"/>
<line x1="555.50" y1="401.78" x2="382.92" y2="457.86" stroke="#ffffff"/>
<line x1="546.11" y1="372.87" x2="373.53" y2="428.94" stroke="#ffffff"/>
<line x1="369.1" y1="385.8" x2="741.9" y2="385.8" stroke="#33e0e6"/>
<line x1="363.6" y1="391.3" x2="374.6" y2="380.3" stroke="#33e0e6" stroke-width="1.3"/>
<line x1="736.4" y1="391.3" x2="747.4" y2="380.3" stroke="#33e0e6" stroke-width="1.3"/>
</svg>
<svg style="left:0;top:0" width="1086" height="789">
<g stroke="#f0f0f0" fill="none" stroke-width="1">
<rect x="46.5" y="622.5" width="8" height="8"/>
<line x1="50.5" y1="622" x2="50.5" y2="587"/>
<line x1="55" y1="626.5" x2="89" y2="626.5"/>
<path d="M50.5 577 L47 588.5 H54 Z M50.5 581 L49 588 M50.5 581 L52 588"/>
<path d="M100 626.5 L88.5 623 V630 Z M96 626.5 L89 625 M96 626.5 L89 628"/>
<path d="M46.5 558 L50.5 562 L54.5 558 M50.5 562 V567.5"/>
<path d="M110.5 622 L118.5 631 M118.5 622 L110.5 631"/>
</g>
</svg>
<svg style="left:0;top:0" width="1086" height="789">
<rect x="782.5" y="612.5" width="217.5" height="8" fill="none" stroke="#747474"/>
<rect x="783" y="616.5" width="30" height="4" fill="#747474"/>
<rect x="813" y="613" width="62" height="3.5" fill="#747474"/>
<rect x="875" y="616.5" width="125" height="4" fill="#747474"/>
<line x1="783" y1="641.5" x2="1030" y2="641.5" stroke="#f0f0f0"/>
<line x1="1017.5" y1="630" x2="1017.5" y2="650" stroke="#f0f0f0"/>
<line x1="1017" y1="630.5" x2="1030" y2="630.5" stroke="#f0f0f0"/>
<line x1="1029.5" y1="630" x2="1029.5" y2="650" stroke="#f0f0f0"/>
</svg>
<div class="t" style="left:806px;top:600px;font-size:10px;line-height:11px;color:#747474">10</div>
<div class="t" style="left:993px;top:600px;font-size:10px;line-height:11px;color:#747474">70</div>
<div class="t" style="left:779px;top:622px;font-size:10px;line-height:11px;color:#747474">0</div>
<div class="t" style="left:869px;top:622px;font-size:10px;line-height:11px;color:#747474">30</div>
<div class="t" style="left:769px;top:372px;font-family:'Liberation Serif',serif;font-size:24px;line-height:26px;color:#3ad8d4"><span style="font-size:20px;position:relative;top:-1px">Φ</span><span style="margin-left:5px;display:inline-block;transform:scaleX(.9);transform-origin:0 0">120</span></div>


<!-- right toolbar -->
<div class="a" style="left:1030px;top:131px;width:56px;height:540px;background:#f5f5f5"></div>
<div class="a" style="left:1056px;top:145px;width:1px;height:522px;background:#d6d6d6"></div>
<div class="a" style="left:1035px;top:137px;width:42px;height:2px;background:repeating-linear-gradient(90deg,#b0b0b0 0 2px,transparent 2px 4px)"></div>
<svg style="left:1035px;top:145px" width="16" height="16" viewBox="0 0 16 16"><rect x="0.5" y="0.5" width="9" height="9" fill="#cfe0f0" stroke="#4a78aa"/><rect x="3.5" y="3.5" width="9" height="9" fill="#4f7fb4" stroke="#2d5a8c"/><rect x="6.5" y="7.5" width="9" height="8" fill="#dce8f4" stroke="#4a78aa"/></svg>
<svg style="left:1035px;top:167px" width="16" height="16" viewBox="0 0 16 16"><rect x="0.5" y="0.5" width="9" height="9" fill="#dce8f4" stroke="#4a78aa"/><rect x="3.5" y="3.5" width="9" height="9" fill="#3f6fa8" stroke="#2d5a8c"/><rect x="6.5" y="7.5" width="9" height="8" fill="#cfe0f0" stroke="#4a78aa"/></svg>
<svg style="left:1035px;top:189px" width="16" height="16" viewBox="0 0 16 16"><rect x="0.5" y="1.5" width="11" height="9" fill="#3f6fa8" stroke="#2d5a8c"/><rect x="4.5" y="5.5" width="11" height="9" fill="#dce8f4" stroke="#4a78aa"/></svg>
<svg style="left:1035px;top:211px" width="16" height="16" viewBox="0 0 16 16"><rect x="0.5" y="1.5" width="11" height="9" fill="#3f6fa8" stroke="#2d5a8c"/><rect x="4.5" y="5.5" width="11" height="9" fill="#c9daea" stroke="#4a78aa"/></svg>
<svg style="left:1063px;top:145px" width="16" height="16" viewBox="0 0 16 16"><path d="M3 12 L12 2 L15 4.5 L6 14 Z" fill="#c8c83a" stroke="#7a7a2a" stroke-width=".6"/><path d="M3 12 L6 14 L4 15.5 L1.5 14 Z" fill="#e8909a"/><path d="M0 15.5 H16" stroke="#333"/></svg>
<svg style="left:1063px;top:167px" width="16" height="16" viewBox="0 0 16 16"><circle cx="4.5" cy="5" r="3.8" fill="#d4d4d4" stroke="#333" stroke-width="1.2"/><circle cx="10.5" cy="11.5" r="3.8" fill="#d4d4d4" stroke="#333" stroke-width="1.2"/><path d="M8.5 2.5 Q12.5 2 13.5 5.5" stroke="#2d4a6a" stroke-width="1.5" fill="none"/><path d="M11 5 H16 L13.5 8.5 Z" fill="#2d4a6a"/></svg>
<svg style="left:1063px;top:189px" width="16" height="16" viewBox="0 0 16 16"><path d="M8 1 V15 M1 8 H15" stroke="#3a5a80" stroke-width="2.4"/><path d="M8 0 L4.5 4 H11.5 Z M8 16 L4.5 12 H11.5 Z M0 8 L4 4.5 V11.5 Z M16 8 L12 4.5 V11.5 Z" fill="#3a5a80"/></svg>
<svg style="left:1063px;top:211px" width="16" height="16" viewBox="0 0 16 16"><path d="M5.5 3.5 A6 6 0 1 0 11 3.2" stroke="#2d4a6a" stroke-width="2.2" fill="none"/><path d="M3 0.5 L8.5 2 L4.5 6.5 Z" fill="#2d4a6a"/></svg>
<svg style="left:1063px;top:233px" width="16" height="16" viewBox="0 0 16 16"><rect x="3.5" y="0.5" width="12" height="12" fill="#dae6f2" stroke="#3a5a80"/><path d="M0 7.5 H9 M0 15.5 H9 M0.5 7 V16 M8.5 7 V16" fill="none" stroke="#111" stroke-dasharray="1 1" shape-rendering="crispEdges"/></svg>
<svg style="left:1063px;top:255px" width="16" height="16" viewBox="0 0 16 16"><path d="M1 14.5 H15 M1 11 H13 Q15 11 15 9 V8 Q15 6 12 6 V4 Q12 1 8 1 Q4 1 4 4 V6 Q1 6 1 9 Z" stroke="#2d3a4a" stroke-width="1.3" fill="none"/><path d="M3 12.5 H13" stroke="#5aa0e0" stroke-width="1.4"/></svg>
<svg style="left:1063px;top:277px" width="16" height="16" viewBox="0 0 16 16"><rect x="0.5" y="0.5" width="6" height="6" fill="#dce6f0" stroke="#222" stroke-width="1.2"/><rect x="9.5" y="0.5" width="6" height="6" fill="#dce6f0" stroke="#222" stroke-width="1.2"/><rect x="0.5" y="9.5" width="6" height="6" fill="#dce6f0" stroke="#222" stroke-width="1.2"/><rect x="9.5" y="9.5" width="6" height="6" fill="#dce6f0" stroke="#222" stroke-width="1.2"/></svg>
<svg style="left:1063px;top:299px" width="16" height="16" viewBox="0 0 16 16"><path d="M6.5 2 L1 13.5 H6.5 Z M9.5 2 L15 13.5 H9.5 Z" fill="#e4ecf4" stroke="#222" stroke-width="1.2"/><line x1="8" y1="0" x2="8" y2="16" stroke="#3a6ab0" stroke-width="1.2"/></svg>
<svg style="left:1063px;top:321px" width="16" height="16" viewBox="0 0 16 16"><path d="M1 13 Q3 5 7 8 Q9 10 11 7" stroke="#6a3a5a" stroke-width="1.4" fill="none"/><path d="M13 1 L11 9" stroke="#2d5d9a" stroke-width="1.6"/><circle cx="12" cy="12" r="2.5" fill="#c060d0"/><circle cx="8" cy="10" r="2" fill="#e0c040"/><circle cx="13" cy="8" r="1.6" fill="#40a0e0"/></svg>
<svg style="left:1063px;top:343px" width="16" height="16" viewBox="0 0 16 16"><path d="M2.5 16 V8 L8 2.5 H16" stroke="#111" stroke-width="1.4" fill="none"/><path d="M2.5 8 V1.5 H8" stroke="#111" stroke-dasharray="1 1" fill="none" shape-rendering="crispEdges"/><path d="M3 7.5 L7.5 3" stroke="#2d6db0" stroke-width="1.4"/></svg>
<svg style="left:1063px;top:365px" width="16" height="16" viewBox="0 0 16 16"><path d="M2.5 16 V9 Q2.5 2.5 9 2.5 H16" stroke="#111" stroke-width="1.4" fill="none"/><path d="M2.5 8 V1.5 H8" stroke="#111" stroke-dasharray="1 1" fill="none" shape-rendering="crispEdges"/><path d="M3 8 Q3 3 8 3" stroke="#2d6db0" stroke-width="1.4" fill="none"/></svg>
<svg style="left:1063px;top:387px" width="16" height="16" viewBox="0 0 16 16"><path d="M0 8.5 H6" stroke="#333" stroke-width="1.2"/><path d="M8 8.5 H16" stroke="#333" stroke-dasharray="2 1.5"/><path d="M5 13 L11 4" stroke="#2d6db0" stroke-width="1.3"/></svg>
<svg style="left:1063px;top:409px" width="16" height="16" viewBox="0 0 16 16"><path d="M0 8.5 H8" stroke="#333" stroke-dasharray="2 1.5"/><path d="M7 14 L13 3" stroke="#2d6db0" stroke-width="1.3"/><path d="M9 8.5 H10" stroke="#333"/></svg>
<svg style="left:1063px;top:430px" width="16" height="16" viewBox="0 0 16 16"><circle cx="4" cy="12" r="3.2" fill="#c82a2a"/><circle cx="7" cy="7" r="2.8" fill="#e07a2a"/><circle cx="3" cy="7" r="2" fill="#e0b040"/><path d="M9 6 L14 1 M11 8 L15 4" stroke="#6a8ab0" stroke-width="1.4"/></svg>
<svg style="left:1063px;top:452px" width="16" height="16" viewBox="0 0 16 16"><path d="M1.5 3 V14.5 H14.5 V3" stroke="#2d4a6a" stroke-width="1.4" fill="none"/><rect x="3" y="1.5" width="3" height="3" fill="#2d6db0"/><rect x="10" y="1.5" width="3" height="3" fill="#2d6db0"/></svg>
<svg style="left:1063px;top:475px" width="16" height="16" viewBox="0 0 16 16"><path d="M0 8.5 H16" stroke="#111" stroke-width="1.6"/><path d="M3 4 L8 8.5 L3 13 Z M13 4 L8 8.5 L13 13 Z" fill="#2d5a8c"/></svg>
<svg style="left:1063px;top:502px" width="16" height="16" viewBox="0 0 16 16"><path d="M1.5 1 V15 M14.5 1 V15" stroke="#111" stroke-width="1.4"/><path d="M2 5.5 H14" stroke="#111" stroke-width="1.2"/><path d="M2 5.5 L5 3.5 V7.5 Z M14 5.5 L11 3.5 V7.5 Z" fill="#111"/></svg>
<svg style="left:1063px;top:524px" width="16" height="16" viewBox="0 0 16 16"><path d="M0.5 5.5 L5.5 0.5 M10.5 15.5 L15.5 10.5" stroke="#111" stroke-width="1.5"/><path d="M3 3 L13 13" stroke="#111" stroke-width="1.3"/><path d="M3 3 L3.5 7 L7 3.5 Z M13 13 L12.5 9 L9 12.5 Z" fill="#111"/></svg>
<svg style="left:1063px;top:547px" width="16" height="16" viewBox="0 0 16 16"><circle cx="8" cy="8" r="7" fill="none" stroke="#555" stroke-width="1.1"/><path d="M8 8 L4 4" stroke="#111" stroke-width="1.3"/><path d="M3.5 3.5 L8 5 L5 8 Z" fill="#111"/></svg>
<svg style="left:1063px;top:569px" width="16" height="16" viewBox="0 0 16 16"><circle cx="8" cy="8" r="7" fill="none" stroke="#555" stroke-width="1.1"/><path d="M4 4 L12 12" stroke="#111" stroke-width="1.3"/><path d="M3 3 L8 4.5 L4.5 8 Z M13 13 L8 11.5 L11.5 8 Z" fill="#111"/></svg>
<svg style="left:1063px;top:590px" width="16" height="16" viewBox="0 0 16 16"><path d="M0 15.5 H16" stroke="#111" stroke-width="1.3"/><path d="M1 11 L8 3" stroke="#111" stroke-width="1.3"/><path d="M7 3 Q13 5 14 11" stroke="#111" fill="none"/><path d="M6 2 L10 3 L7 6 Z M14 12 L11.5 9.5 L15.5 9 Z" fill="#111"/></svg>
<svg style="left:1063px;top:619px" width="16" height="16" viewBox="0 0 16 16"><path d="M1.5 15 L4.5 1 M11.5 15 L14.5 1" stroke="#111" stroke-width="1.3"/><path d="M3.5 6 H12.5" stroke="#111"/><path d="M3.5 6 L6 4.5 V7.5 Z M12.5 6 L10 4.5 V7.5 Z" fill="#111"/></svg>
<div class="a" style="left:1060px;top:496px;width:22px;height:1px;background:#d0d0d0"></div>
<div class="a" style="left:1060px;top:612px;width:22px;height:1px;background:#d0d0d0"></div>


<!-- model tabs -->
<div class="a" style="left:27px;top:650px;width:1003px;height:18px;background:#efefef"></div>
<div class="a" style="left:27px;top:651px;width:33px;height:17px;background:#f0f0f0;border:1px solid #c8c8c8"></div>
<div class="a" style="left:43px;top:652px;width:1px;height:15px;background:#c8c8c8"></div>
<svg style="left:33px;top:653px" width="10" height="12" viewBox="0 0 10 12"><path d="M7 1 L2 6 L7 11 Z" fill="#8a8a8a"/></svg>
<svg style="left:48px;top:653px" width="10" height="12" viewBox="0 0 10 12"><path d="M2 1 L7 6 L2 11 Z" fill="#8a8a8a"/></svg>
<svg style="left:0;top:0" width="1086" height="789">
<path d="M106 651.5 L153 651.5 L146 667.5 H106 Z" fill="#f7f7f7"/>
<path d="M61 651.5 L69 667.5 H98 L106 651.5 Z" fill="#fcfcfc"/>
<path d="M60.5 651.5 L68 667.5 M98 667.5 L106 651.5" stroke="#222" fill="none"/>
<path d="M102.5 659 L106 667.5 M146 667.5 L153 651.5" stroke="#222" fill="none"/>
</svg>
<div class="t" style="left:72px;top:653px;font-size:12px">模型</div>
<div class="t" style="left:111px;top:653px;font-size:12px">布局1</div>


<!-- command area -->
<div class="a" style="left:0;top:668px;width:1086px;height:1px;background:#fff"></div>
<div class="a" style="left:0;top:669px;width:1086px;height:4px;background:#e0e0e0"></div>
<div class="a" style="left:0;top:673px;width:1086px;height:1px;background:#6a6a6a"></div>
<div class="a" style="left:0;top:674px;width:1086px;height:1px;background:#8c8c8c"></div>
<div class="a" style="left:0;top:675px;width:1086px;height:91px;background:#fff"></div>
<div class="a" style="left:1px;top:674px;width:1px;height:92px;background:#a0a0a0"></div>
<div class="t" style="left:12px;top:696px;font-size:12.5px;letter-spacing:.15px">指定第一条尺寸界线原点:</div>
<div class="t" style="left:12px;top:713px;font-size:12.5px;letter-spacing:.15px">指定第二条尺寸界线原点:</div>
<div class="t" style="left:169px;top:713px;font-size:12.5px;letter-spacing:.15px">指定尺寸线位置:</div>
<div class="t" style="left:5px;top:730px;font-size:12.5px">命令:</div>
<div class="a" style="left:2px;top:745px;width:1080px;height:1px;background:#a0a0a0"></div>
<div class="t" style="left:5px;top:746px;font-size:12.5px">命令:</div>
<div class="a" style="left:44px;top:748px;width:2px;height:14px;background:#000"></div>
<div class="a" style="left:1066px;top:675px;width:17px;height:70px;background:#f0f0f0"></div>
<div class="a" style="left:1083px;top:675px;width:3px;height:91px;background:#f7f7f7"></div>
<svg style="left:1069px;top:681px" width="9" height="6" viewBox="0 0 9 6"><path d="M0.5 5 L4.5 1 L8.5 5" stroke="#606060" fill="none" stroke-width="1.4"/></svg>
<div class="a" style="left:1066px;top:711px;width:15px;height:17px;background:#cdcdcd"></div>
<svg style="left:1069px;top:733px" width="9" height="6" viewBox="0 0 9 6"><path d="M0.5 1 L4.5 5 L8.5 1" stroke="#606060" fill="none" stroke-width="1.4"/></svg>
<div class="a" style="left:995px;top:747px;width:71px;height:18px;background:#f0f0f0"></div>
<div class="a" style="left:1066px;top:747px;width:17px;height:18px;background:#f5f5f5"></div>
<svg style="left:1000px;top:752px" width="6" height="9" viewBox="0 0 6 9"><path d="M5 0.5 L1 4.5 L5 8.5" stroke="#606060" fill="none" stroke-width="1.4"/></svg>
<div class="a" style="left:1011px;top:748px;width:17px;height:16px;background:#cdcdcd"></div>
<svg style="left:1054px;top:752px" width="6" height="9" viewBox="0 0 6 9"><path d="M1 0.5 L5 4.5 L1 8.5" stroke="#606060" fill="none" stroke-width="1.4"/></svg>


<!-- status bar -->
<div class="a" style="left:0;top:766px;width:1086px;height:4px;background:#f6f6f6"></div>
<div class="a" style="left:0;top:770px;width:1086px;height:18px;background:#efefef"></div>
<div class="a" style="left:0;top:788px;width:1086px;height:1px;background:#707070"></div>
<div class="t" style="left:3px;top:772px;font-size:12.5px;letter-spacing:.05px">-3303.695456,&nbsp; 19124.945901,&nbsp; 0.000000</div>
<div class="t" style="left:511px;top:772px;font-size:12px">栅格</div>
<div class="t" style="left:547px;top:772px;font-size:12px">正交</div>
<div class="t" style="left:583px;top:772px;font-size:12px">极轴</div>
<div class="a" style="left:617px;top:770px;width:58px;height:17px;background:#d8eaf9;border:1px solid #3b8ad8"></div>
<div class="a" style="left:677px;top:770px;width:58px;height:17px;background:#d8eaf9;border:1px solid #3b8ad8"></div>
<div class="t" style="left:619px;top:772px;font-size:12px">对象捕捉</div>
<div class="t" style="left:679px;top:772px;font-size:12px">对象追踪</div>
<div class="t" style="left:740px;top:772px;font-size:12.5px">DYN</div>
<div class="t" style="left:776px;top:772px;font-size:12px">线宽</div>
<div class="t" style="left:813px;top:772px;font-size:12px;color:#2323d0">提交软件问题或增加新功能</div>
<svg style="left:970px;top:771px" width="17" height="15" viewBox="0 0 17 15"><path d="M0 14 L4 1 H8 L5 14 Z" fill="#1aa88a"/><path d="M6 14 L8.5 5 L10 1 H12.5 L11 14 Z" fill="#1aa88a"/><path d="M12 14 L13 1 H15 L17 14 Z" fill="#1aa88a"/><path d="M0.5 13 L16.5 4.5" stroke="#fff" stroke-width="1.1"/></svg>
<div class="t" style="left:993px;top:771px;font-size:13px;line-height:15px;color:#222">CAD.MxCloud</div>

<div class="a" style="left:1084px;top:55px;width:1px;height:734px;background:#c0c0c0"></div>
</body></html>
